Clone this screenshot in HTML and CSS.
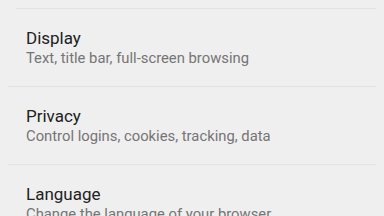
FILE: index.html
```html
<!DOCTYPE html>
<html>
<head>
<meta charset="utf-8">
<link rel="stylesheet" href="styles.css">
</head>
<body>
<div class="list">
  <div class="item first">
    <div class="title">Display</div>
    <div class="sub">Text, title bar, full-screen browsing</div>
  </div>
  <div class="item">
    <div class="title">Privacy</div>
    <div class="sub">Control logins, cookies, tracking, data</div>
  </div>
  <div class="item">
    <div class="title">Language</div>
    <div class="sub">Change the language of your browser</div>
  </div>
</div>
</body>
</html>
```
FILE: styles.css
```css
html, body {
  margin: 0;
  padding: 0;
  background: #efefef;
  width: 384px;
  height: 216px;
  overflow: hidden;
  font-family: Roboto, "Noto Sans", sans-serif;
}
.list {
  padding-top: 8px;
}
.item {
  margin: 0 8px;
  border-top: 1px solid #e2e2e2;
  padding: 19px 18px 0;
  height: 58px;
}
.item.first {
  margin-left: 16px;
  padding-left: 10px;
}
.title {
  font-size: 17px;
  line-height: 20px;
  color: #212121;
}
.sub {
  margin-top: 1px;
  font-size: 14.8px;
  line-height: 18px;
  color: #757575;
}
```
